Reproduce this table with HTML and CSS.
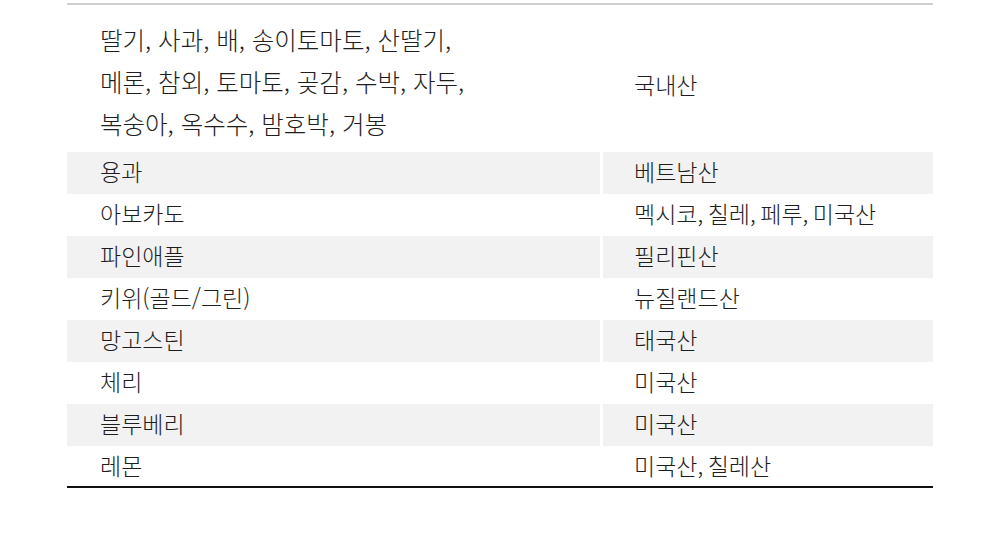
FILE: index.html
```html
<!DOCTYPE html>
<html lang="ko">
<head>
<meta charset="utf-8">
<link rel="stylesheet" href="styles.css">
</head>
<body>
<div class="wrap">
  <table class="origin">
    <tbody>
      <tr class="first">
        <td class="name">딸기, 사과, 배, 송이토마토, 산딸기,<br>메론, 참외, 토마토, 곶감, 수박, 자두,<br>복숭아, 옥수수, 밤호박, 거봉</td>
        <td class="place">국내산</td>
      </tr>
      <tr class="alt"><td class="name">용과</td><td class="place">베트남산</td></tr>
      <tr><td class="name">아보카도</td><td class="place">멕시코, 칠레, 페루, 미국산</td></tr>
      <tr class="alt"><td class="name">파인애플</td><td class="place">필리핀산</td></tr>
      <tr><td class="name">키위(골드/그린)</td><td class="place">뉴질랜드산</td></tr>
      <tr class="alt"><td class="name">망고스틴</td><td class="place">태국산</td></tr>
      <tr><td class="name">체리</td><td class="place">미국산</td></tr>
      <tr class="alt"><td class="name">블루베리</td><td class="place">미국산</td></tr>
      <tr class="last"><td class="name">레몬</td><td class="place">미국산, 칠레산</td></tr>
    </tbody>
  </table>
</div>
</body>
</html>
```

FILE: styles.css
```css
html, body {
  margin: 0;
  padding: 0;
  background: #fff;
}
.wrap {
  padding: 3px 67px 0 67px;
}
.origin {
  width: 866px;
  border-collapse: separate;
  border-spacing: 0;
  border-top: 2px solid #cfcfcf;
  border-bottom: 2px solid #111;
  font-family: "Noto Sans CJK KR", "Noto Sans", sans-serif;
  font-weight: 300;
  font-size: 23px;
  color: #1e1e1e;
}
.origin td {
  height: 42px;
  padding: 0 0 4px 0;
  vertical-align: middle;
  line-height: 38px;
  box-sizing: border-box;
}
.origin td.name {
  width: 533px;
  padding-left: 33px;
}
.origin td.place {
  padding-left: 31px;
  border-left: 3px solid #fff;
  word-spacing: -2px;
}
.origin tr.alt td {
  background: #f2f2f2;
}
.origin tr.last td {
  height: 40px;
  padding-bottom: 2px;
}
.origin tr.first td {
  height: 147px;
  line-height: 42px;
}
.origin tr.first td.name {
  font-size: 24.5px;
  padding-top: 14px;
  padding-bottom: 7px;
}
.origin tr.first td.place {
  padding-top: 11px;
  padding-bottom: 0;
}
```
